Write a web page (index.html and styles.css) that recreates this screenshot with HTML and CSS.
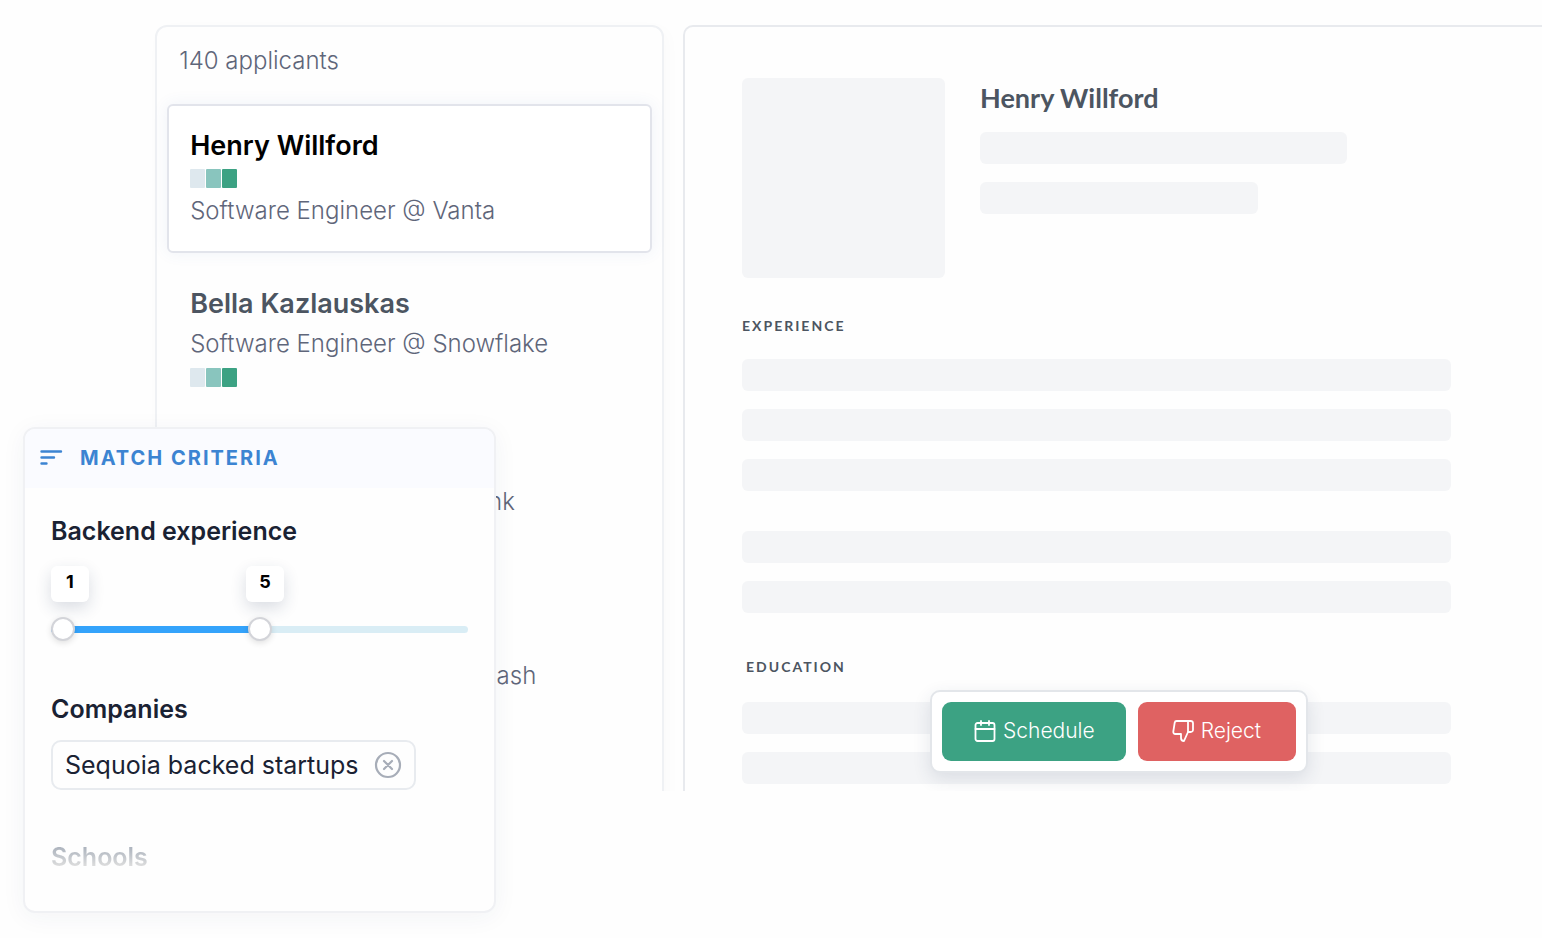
FILE: index.html
```html
<!DOCTYPE html>
<html lang="en">
<head>
    <meta charset="UTF-8">
    <meta name="viewport" content="width=device-width, initial-scale=1.0">
    <title>Applicants</title>
    <link rel="stylesheet" href="styles.css">
</head>
<body>
<main class="workspace">
    <section class="applicants">
        <h2 class="applicants-count">140 applicants</h2>
        <ul class="applicant-list">
            <li class="applicant selected">
                <h3>Henry Willford</h3>
                <div class="score"><span class="low"></span><span class="mid"></span><span class="high"></span></div>
                <p>Software Engineer @ Vanta</p>
            </li>
            <li class="applicant">
                <h3>Bella Kazlauskas</h3>
                <p>Software Engineer @ Snowflake</p>
                <div class="score"><span class="low"></span><span class="mid"></span><span class="high"></span></div>
            </li>
            <li class="applicant compact">
                <p>Software Engineer @ Rethink</p>
            </li>
            <li class="applicant compact">
                <p>Software Engineer @ Unsplash</p>
            </li>
        </ul>
    </section>

    <section class="detail">
        <header class="profile">
            <div class="photo"></div>
            <div class="profile-info">
                <h2>Henry Willford</h2>
                <div class="bar long"></div>
                <div class="bar short"></div>
            </div>
        </header>

        <h3 class="section-title">EXPERIENCE</h3>
        <div class="bars">
            <div class="bar"></div>
            <div class="bar"></div>
            <div class="bar"></div>
        </div>
        <div class="bars second-job">
            <div class="bar"></div>
            <div class="bar"></div>
        </div>

        <h3 class="section-title education">EDUCATION</h3>
        <div class="bars">
            <div class="bar"></div>
            <div class="bar"></div>
        </div>

        <div class="actions">
            <button type="button" class="schedule">
                <svg width="24" height="24" viewBox="0 0 24 24" fill="none" stroke="currentColor" stroke-width="1.8" stroke-linecap="round" stroke-linejoin="round" aria-hidden="true">
                    <rect x="2.500" y="4" width="19" height="18" rx="2"/>
                    <path d="M2.500 10h19M8 2v4M16 2v4"/>
                </svg>
                Schedule
            </button>
            <button type="button" class="reject">
                <svg width="24" height="24" viewBox="0 0 24 24" fill="none" stroke="currentColor" stroke-width="1.8" stroke-linecap="round" stroke-linejoin="round" aria-hidden="true">
                    <path d="M10 15v4a3 3 0 0 0 3 3l4-9V2H5.700a2 2 0 0 0-2 1.700l-1.400 9a2 2 0 0 0 2 2.300H10z"/>
                    <path d="M17 2h2.700a2.300 2.300 0 0 1 2.300 2v7a2.300 2.300 0 0 1-2.300 2H17"/>
                </svg>
                Reject
            </button>
        </div>
    </section>
</main>

<aside class="criteria">
    <header class="criteria-header">
        <svg width="24" height="18" viewBox="0 0 24 18" fill="none" stroke="currentColor" stroke-width="2.400" stroke-linecap="round" aria-hidden="true">
            <path d="M2.500 2.500h19.500M2.500 8.500h12.500M2.500 14.500h5"/>
        </svg>
        <h2>MATCH CRITERIA</h2>
    </header>
    <div class="criteria-body">
        <h3>Backend experience</h3>
        <div class="range-values">
            <output for="range-min">1</output>
            <output for="range-max">5</output>
        </div>
        <div class="range">
            <input type="range" id="range-min" min="1" max="9" value="1" aria-label="Minimum backend experience">
            <input type="range" id="range-max" min="1" max="9" value="5" aria-label="Maximum backend experience">
        </div>

        <h3>Companies</h3>
        <div class="chip">
            Sequoia backed startups
            <button type="button" aria-label="Remove">
                <svg width="28" height="28" viewBox="0 0 28 28" fill="none" stroke="currentColor" stroke-width="2.200" stroke-linecap="round" aria-hidden="true">
                    <circle cx="14" cy="14" r="12"/>
                    <path d="M10 10l8 8M18 10l-8 8"/>
                </svg>
            </button>
        </div>

        <h3 class="faded">Schools</h3>
    </div>
</aside>
</body>
</html>
```

FILE: styles.css
```css
* {
    box-sizing: border-box;
}

body {
    margin: 0;
    background-color: #fefefe;
    font-family: 'Inter', sans-serif;
    font-size: 24px;
    line-height: 32px;
    color: #5f667a;
    overflow-x: hidden;
}

h2, h3, p, ul {
    margin: 0;
    padding: 0;
}

button {
    font-family: inherit;
    border: none;
    cursor: pointer;
}

/* Two panels, cut off at the bottom */
.workspace {
    display: flex;
    gap: 19px;
    height: 791px;
    padding-top: 25px;
    padding-left: calc(10% + 1px);
    overflow: hidden;
}

/* Applicant list */
.applicants {
    flex: none;
    width: 33vw;
    height: 900px;
    padding: 18px 10px;
    background-color: #fefefe;
    border: 2px solid #eff1f4;
    border-radius: 12px;
    box-shadow: 4px 4px 16px rgba(0, 0, 0, 0.02);
}

.applicants-count {
    padding: 0 12px;
    font-size: 24px;
    font-weight: 300;
}

.applicant-list {
    margin-top: 27px;
    list-style: none;
}

.applicant {
    display: flex;
    flex-direction: column;
    gap: 8px;
    padding: 35px 23px;
}

.applicant h3 {
    font-size: 27px;
    font-weight: 600;
    color: #4c5561;
}

.applicant p {
    font-weight: 300;
}

.applicant.selected {
    gap: 7px;
    padding: 24px 21px;
    background-color: #fff;
    border: 2px solid #e2e4eb;
    border-radius: 6px;
    box-shadow: 0 0 16px rgba(70, 100, 180, 0.08);
}

.applicant.selected h3 {
    color: #000;
}

.applicant.compact {
    padding: 64px 23px 78px;
}

.score {
    display: flex;
    gap: 1px;
}

.score span {
    width: 15px;
    height: 19px;
    border-radius: 1px;
}

.score .low {
    background-color: #dee8ee;
}

.score .mid {
    background-color: #89c5be;
}

.score .high {
    background-color: #3ca283;
}

/* Applicant detail */
.detail {
    position: relative;
    flex: 1;
    height: 900px;
    padding: 51px 91px 0 57px;
    background-color: #fefefe;
    border: 2px solid #e8eaee;
    border-right: none;
    border-radius: 10px 0 0 0;
    font-family: 'Lato', sans-serif;
}

.profile {
    display: flex;
    gap: 35px;
}

.photo {
    width: 203px;
    height: 200px;
    background-color: #f4f5f7;
    border-radius: 6px;
}

.profile-info {
    display: flex;
    flex: 1;
    flex-direction: column;
    gap: 18px;
    padding-top: 4px;
}

.profile-info h2 {
    font-size: 27px;
    font-weight: 700;
    color: #4c5561;
}

.bar {
    height: 32px;
    background-color: #f4f5f7;
    border-radius: 6px;
}

.bar.long {
    width: 78%;
}

.bar.short {
    width: 59%;
}

.section-title {
    margin: 36px 0 21px;
    font-size: 14px;
    line-height: 24px;
    font-weight: 700;
    letter-spacing: 2px;
    color: #4c5561;
}

.section-title.education {
    margin-top: 42px;
    margin-bottom: 23px;
    padding-left: 4px;
}

.bars {
    display: grid;
    gap: 18px;
}

.second-job {
    margin-top: 40px;
}

/* Action bar floats over the detail panel */
.actions {
    position: absolute;
    top: 663px;
    left: 245px;
    display: flex;
    gap: 12px;
    padding: 10px;
    background-color: #fff;
    border: 2px solid #e3e6ea;
    border-radius: 10px;
    box-shadow: 0 6px 18px rgba(40, 60, 90, 0.12);
}

.actions button {
    display: flex;
    align-items: center;
    gap: 6px;
    height: 59px;
    padding: 0 31px 2px;
    font-family: 'Inter', sans-serif;
    font-size: 21px;
    font-weight: 300;
    color: #fff;
    border-radius: 9px;
}

.actions .schedule {
    background-color: #3ca283;
}

.actions .reject {
    padding-left: 33px;
    padding-right: 35px;
    background-color: #df6262;
}

/* Match criteria card lies over the applicant list */
.criteria {
    position: absolute;
    top: 427px;
    left: 23px;
    width: 473px;
    height: 486px;
    background-color: #fefefe;
    border: 2px solid #f0f1f4;
    border-radius: 12px;
    box-shadow: 0 4px 24px rgba(30, 50, 90, 0.05);
    overflow: hidden;
}

.criteria-header {
    display: flex;
    align-items: center;
    gap: 17px;
    height: 59px;
    padding: 0 14px 2px;
    background-color: #fafbff;
    color: #3c84d2;
}

.criteria-header h2 {
    font-size: 20px;
    font-weight: 700;
    letter-spacing: 2px;
}

.criteria-body {
    padding: 27px 26px 0;
}

.criteria-body h3 {
    font-size: 25px;
    font-weight: 600;
    color: #1a2233;
}

.range-values {
    display: flex;
    gap: 157px;
    margin-top: 19px;
}

.range-values output {
    width: 38px;
    height: 36px;
    background-color: #fff;
    border-radius: 6px;
    box-shadow: 0 6px 16px rgba(30, 50, 90, 0.16);
    font-size: 18px;
    font-weight: 700;
    color: #000;
    text-align: center;
}

/* Both thumbs share one track */
.range {
    display: grid;
    align-items: center;
    height: 24px;
    margin: 15px 0 52px;
}

.range::before {
    content: "";
    grid-area: 1 / 1;
    height: 7px;
    border-radius: 4px;
    background: linear-gradient(to right, #34a3fb 50%, #d9edf5 50%);
}

.range input {
    grid-area: 1 / 1;
    width: 100%;
    height: 24px;
    margin: 0;
    background: none;
    -webkit-appearance: none;
    appearance: none;
    pointer-events: none;
}

.range input::-webkit-slider-thumb {
    -webkit-appearance: none;
    width: 24px;
    height: 24px;
    background-color: #fff;
    border: 2px solid #d3d4d9;
    border-radius: 50%;
    box-shadow: 0 2px 6px rgba(0, 0, 0, 0.12);
    pointer-events: auto;
}

.chip {
    display: inline-flex;
    align-items: center;
    gap: 15px;
    height: 50px;
    margin: 15px 0 51px;
    padding: 0 12px;
    border: 2px solid #e8ebef;
    border-radius: 10px;
    font-size: 25px;
    color: #1a2233;
}

.chip button {
    display: flex;
    padding: 0;
    background: none;
    color: #a7adb8;
}

.criteria-body .faded {
    background: linear-gradient(#adb4be 20%, #dedede 80%);
    -webkit-background-clip: text;
    background-clip: text;
    color: transparent;
}
```
